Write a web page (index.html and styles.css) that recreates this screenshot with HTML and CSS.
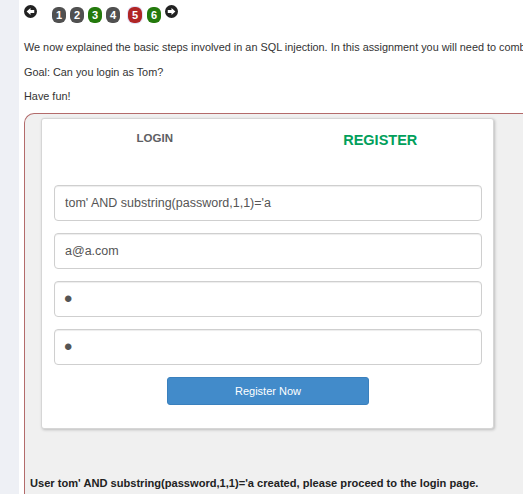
FILE: index.html
```html
<!DOCTYPE html>
<html>
<head>
<meta charset="utf-8">
<link rel="stylesheet" href="styles.css">
</head>
<body>
<div class="sidebar"></div>
<div class="main">
  <div class="nav">
    <svg class="arrow" viewBox="0 0 16 16" width="13" height="13"><circle cx="8" cy="8" r="8" fill="#222"/><path d="M3.2 8 L8 3.6 V6.2 H12.6 V9.8 H8 V12.4 Z" fill="#fff"/></svg>
    <span class="badge gray first">1</span>
    <span class="badge gray">2</span>
    <span class="badge green">3</span>
    <span class="badge gray">4</span>
    <span class="badge red">5</span>
    <span class="badge green">6</span>
    <svg class="arrow" viewBox="0 0 16 16" width="13" height="13"><circle cx="8" cy="8" r="8" fill="#222"/><path d="M12.8 8 L8 3.6 V6.2 H3.4 V9.8 H8 V12.4 Z" fill="#fff"/></svg>
  </div>
  <p class="intro">We now explained the basic steps involved in an SQL injection. In this assignment you will need to combine all the things we explained in the SQL lessons.</p>
  <p class="intro">Goal: Can you login as Tom?</p>
  <p class="intro">Have fun!</p>
  <div class="attack">
    <div class="card">
      <div class="tabs">
        <div class="tab login">LOGIN</div>
        <div class="tab register">REGISTER</div>
      </div>
      <form class="form">
        <input class="field" type="text" value="tom' AND substring(password,1,1)='a">
        <input class="field" type="text" value="a@a.com">
        <input class="field secret" type="password" value="a">
        <input class="field secret" type="password" value="a">
        <button class="submit" type="button">Register Now</button>
      </form>
    </div>
    <div class="message">User tom' AND substring(password,1,1)='a created, please proceed to the login page.</div>
  </div>
</div>
</body>
</html>
```
FILE: styles.css
```css
html, body {
  margin: 0;
  height: 100%;
  overflow: hidden;
}
body {
  display: flex;
  font-family: "Liberation Sans", Arial, sans-serif;
  background: #fff;
  color: #333;
}
.sidebar {
  flex: none;
  width: 19px;
  background: #eef0f5;
}
.main {
  flex: none;
  width: 760px;
  padding-left: 5px;
}
.nav {
  display: flex;
  align-items: flex-start;
  height: 23px;
  padding-top: 5px;
  box-sizing: border-box;
  margin-bottom: 16px;
}
.arrow {
  flex: none;
  display: block;
}
.badge {
  width: 14px;
  height: 16px;
  margin-top: 2px;
  margin-left: 4px;
  border-radius: 6px;
  color: #fff;
  font-weight: bold;
  font-size: 11px;
  line-height: 16px;
  text-align: center;
}
.badge.first { margin-left: 15px; }
.gray { background: #505050; }
.green { background: #247a0c; }
.red {
  background: #b02525;
  margin-left: 8px;
  box-shadow: 0 0 0 1px #e4e0f6;
}
.badge.red + .badge { margin-left: 5px; }
.badge + .arrow { margin-left: 4px; margin-top: 0; }
.intro {
  margin: 0 0 8.5px;
  font-size: 10.86px;
  line-height: 16px;
  white-space: nowrap;
}
.attack {
  border: 1px solid #b36b6b;
  border-right: none;
  border-bottom: none;
  border-top-left-radius: 10px;
  background: #f0f0f0;
  padding: 4px 0 40px 5px;
}
.card {
  width: 453px;
  margin-left: 11px;
  box-sizing: border-box;
  background: #fff;
  border: 1px solid #d6d6d6;
  border-radius: 3px;
  box-shadow: 1px 1px 3px rgba(0,0,0,0.22);
  padding-bottom: 23px;
}
.tabs {
  display: grid;
  grid-template-columns: 1fr 1fr;
  height: 66px;
}
.tab {
  text-align: center;
  font-weight: bold;
  line-height: 20px;
}
.login {
  color: #5e5e63;
  font-size: 11.5px;
  padding-top: 9px;
}
.register {
  color: #029f5b;
  font-size: 14.5px;
  padding-top: 11px;
}
.form {
  display: flex;
  flex-direction: column;
  gap: 12px;
  padding: 0 11px 0 12px;
  margin: 0;
}
.field {
  height: 36px;
  box-sizing: border-box;
  border: 1px solid #cfcfcf;
  border-radius: 4px;
  padding: 0 10px;
  font-family: "Liberation Sans", Arial, sans-serif;
  font-size: 12.5px;
  color: #555;
  box-shadow: inset 0 1px 1px rgba(0,0,0,0.075);
  outline: none;
}
.secret {
  font-size: 24px;
  padding-left: 9px;
}
.submit {
  align-self: center;
  width: 202px;
  height: 28px;
  margin-top: 0;
  background: #428bca;
  border: 1px solid #3a80bd;
  border-radius: 3px;
  color: #fff;
  font-family: "Liberation Sans", Arial, sans-serif;
  font-size: 11px;
  padding: 0;
}
.message {
  margin-top: 46px;
  font-size: 11.1px;
  font-weight: bold;
  line-height: 16px;
  color: #222;
}
```
